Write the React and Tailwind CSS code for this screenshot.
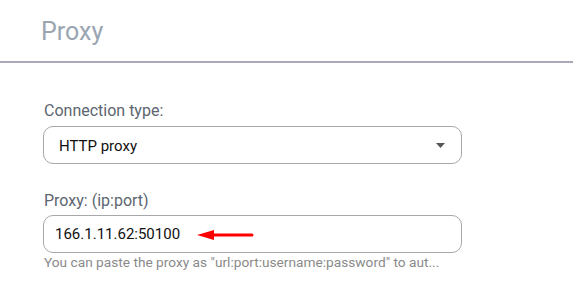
export default function App() {
  const font = { fontFamily: 'Roboto, "Liberation Sans", sans-serif' };
  return (
    <div className="w-[573px] h-[284px] bg-white overflow-hidden" style={font}>
      <div className="h-[63px] border-b-[2px] border-[#a9a9b9] pl-[41px] pt-[18px]">
        <div className="text-[25px] leading-[28px] text-[#9aa5b1]">Proxy</div>
      </div>
      <div className="pl-[43px] w-[462px] pt-[38px]">
        <div className="text-[16px] leading-[19px] text-[#5c6570] pl-[1px]">Connection type:</div>
        <div className="mt-[6px] h-[38px] border border-[#a8a8a8] rounded-[10px] flex items-center justify-between pl-[15px] pr-[16px] pt-[2px]">
          <span className="text-[15px] text-[#111]">HTTP proxy</span>
          <svg width="9" height="5" viewBox="0 0 9 5" className="mt-[-1px]">
            <path d="M0 0 L9 0 L4.5 5 Z" fill="#555" />
          </svg>
        </div>
        <div className="mt-[27px] text-[16px] leading-[19px] text-[#5c6570] pl-[1px]">Proxy: (ip:port)</div>
        <div className="mt-[5px] h-[38px] border border-[#a8a8a8] rounded-[10px] flex items-center pl-[11px] pt-[1px]">
          <span className="text-[15px] text-[#111]">166.1.11.62:50100</span>
          <svg width="58" height="12" viewBox="0 0 58 12" className="ml-[17px]">
            <path d="M16 6 L55 6" stroke="#ff0000" strokeWidth="3" strokeLinecap="round" />
            <path d="M0 6 L17 1 L17 11 Z" fill="#ff0000" />
          </svg>
        </div>
        <div className="mt-[1px] text-[13.7px] leading-[16px] text-[#8a8a8a] pl-[1px] whitespace-nowrap">
          You can paste the proxy as "url:port:username:password" to aut...
        </div>
      </div>
    </div>
  );
}
